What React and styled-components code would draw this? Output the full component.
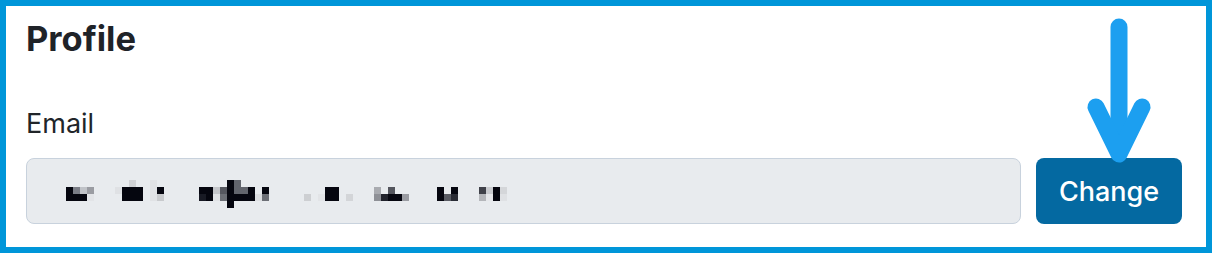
import React from 'react';
import styled, { createGlobalStyle } from 'styled-components';

const GlobalStyle = createGlobalStyle`
    html, body {
        margin: 0;
        padding: 0;
        background: #ffffff;
    }
    body {
        font-family: Inter, 'Noto Sans', 'Liberation Sans', sans-serif;
    }
`;

const Frame = styled.div`
    position: relative;
    box-sizing: border-box;
    width: 1212px;
    height: 253px;
    border: 6px solid #0096d9;
    background: #ffffff;
    padding: 13px 24px 0 20px;
`;

const Title = styled.h2`
    margin: 0;
    font-size: 34.5px;
    line-height: 40px;
    font-weight: 700;
    color: #1f2328;
`;

const Label = styled.label`
    display: block;
    margin-top: 50px;
    font-size: 27px;
    line-height: 30px;
    font-weight: 400;
    color: #212529;
`;

const Row = styled.div`
    display: flex;
    gap: 15px;
    margin-top: 19px;
    height: 66px;
`;

const Field = styled.div`
    flex: 1;
    box-sizing: border-box;
    height: 100%;
    background: #e8ebee;
    border: 1px solid #c8d2dd;
    border-radius: 8px;
    padding: 21px 0 0 39px;
`;

const Button = styled.button`
    box-sizing: border-box;
    width: 146px;
    height: 100%;
    border: none;
    border-radius: 8px;
    background: #0469a1;
    color: #ffffff;
    font-family: inherit;
    font-size: 27px;
    font-weight: 500;
    cursor: pointer;
`;

const Arrow = styled.svg`
    position: absolute;
    left: 1070px;
    top: 6px;
    pointer-events: none;
`;

// pixelated (redacted) email address: [col, row, colour]
const D = '#05060f';
const cells = [
    [0, 1, D], [0, 2, D],
    [1, 1, '#7a7d86'], [1, 2, D],
    [2, 1, '#c0c3c8'], [2, 2, D],
    [3, 1, '#9a9ca2'], [3, 2, '#e2e4e7'],
    [7, 1, '#dfe1e4'],
    [8, 1, D], [8, 2, D],
    [9, 0, '#d0d2d5'], [9, 1, D], [9, 2, D],
    [10, 1, D], [10, 2, D],
    [12, 0, '#e0e2e5'], [12, 1, '#e0e2e5'], [12, 2, '#e0e2e5'],
    [13, 1, D], [13, 2, '#c8cacd'],
    [19, 1, D], [19, 2, '#181a24'],
    [20, 1, D], [20, 2, D],
    [21, 1, '#c4c6ca'], [21, 2, '#e0e2e5'],
    [22, 1, '#55575f'], [22, 2, '#6c6f76'],
    [23, 0, D], [23, 1, D], [23, 2, D], [23, 3, D],
    [24, 0, '#62656d'], [24, 1, '#62656d'], [24, 2, D],
    [25, 1, '#62656d'], [25, 2, D],
    [26, 1, D], [26, 2, D],
    [27, 2, '#dcdee1'],
    [28, 1, D], [28, 2, '#6c6f76'],
    [34, 2, '#cdcfd2'],
    [36, 2, '#e2e4e7'],
    [37, 1, D], [37, 2, D],
    [38, 1, D], [38, 2, D],
    [40, 2, '#d3d5d8'],
    [44, 1, '#a9abb0'], [44, 2, '#8e9096'],
    [45, 2, '#20222b'],
    [46, 1, '#53555d'], [46, 2, D],
    [47, 2, D],
    [48, 2, '#9a9ca2'],
    [53, 1, D], [53, 2, D],
    [54, 2, '#5a5c64'],
    [55, 1, D], [55, 2, '#2a2c35'],
    [59, 1, '#3f4149'], [59, 2, '#b4b6ba'],
    [60, 1, '#c9cbcf'], [60, 2, '#e5e7ea'],
    [61, 1, D], [61, 2, D],
    [62, 1, '#d4d6d9'], [62, 2, '#dfe1e4'],
];

const CELL = 7;

const Redacted = () => (
    <svg width={63 * CELL} height={4 * CELL} shapeRendering="crispEdges">
        {cells.map(([c, r, fill]) => (
            <rect key={`${c}-${r}`} x={c * CELL} y={r * CELL} width={CELL} height={CELL} fill={fill} />
        ))}
    </svg>
);

const App = () => (
    <>
        <GlobalStyle />
        <Frame>
            <Title>Profile</Title>
            <Label>Email</Label>
            <Row>
                <Field>
                    <Redacted />
                </Field>
                <Button>Change</Button>
            </Row>
            <Arrow width="90" height="160" viewBox="0 0 90 160">
                <g stroke="#1c9ff0" strokeWidth="17" strokeLinecap="round" strokeLinejoin="round" fill="none">
                    <line x1="43" y1="15" x2="43" y2="140" />
                    <polyline points="20,95 43,142 66,95" />
                </g>
            </Arrow>
        </Frame>
    </>
);

export default App;
